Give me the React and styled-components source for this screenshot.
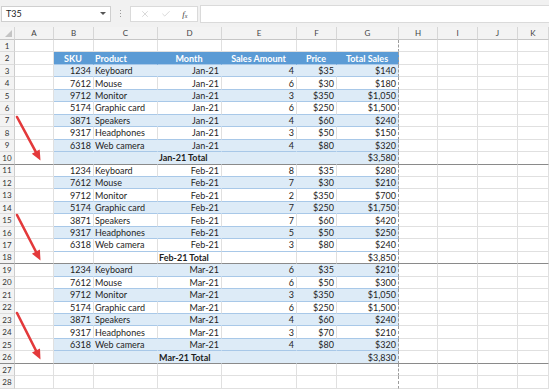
import React from "react";
import styled, { createGlobalStyle } from "styled-components";
import { X, Check } from "lucide-react";

const GlobalStyle = createGlobalStyle`
  html, body { margin: 0; padding: 0; background: #ffffff; }
  body { font-family: Lato, "Liberation Sans", sans-serif; }
`;

const COLS = "15px 39px 40px 64px 64px 75px 40px 62px 39px 40px 40px 1fr";
const BLUE = "#ddebf7";
const HEAD = "#5b9bd5";
const LETTERS = ["A", "B", "C", "D", "E", "F", "G", "H", "I", "J", "K"];

const Page = styled.div`
  position: relative;
  width: 549px;
  height: 389px;
  overflow: hidden;
  background: #fff;
`;

const Toolbar = styled.div`
  display: flex;
  align-items: center;
  height: 27px;
  padding: 0 0 0 1px;
  background: #f1f1f1;
  box-sizing: border-box;
`;

const NameBox = styled.div`
  display: flex;
  align-items: center;
  justify-content: space-between;
  box-sizing: border-box;
  width: 110px;
  height: 16px;
  padding: 0 4px 0 4px;
  background: #fff;
  border: 1px solid #cfcfcf;
  font-size: 9px;
  color: #222;
`;

const Caret = styled.span`
  width: 0;
  height: 0;
  border-left: 3px solid transparent;
  border-right: 3px solid transparent;
  border-top: 3px solid #555;
`;

const Grip = styled.div`
  display: flex;
  flex-direction: column;
  align-items: center;
  justify-content: center;
  gap: 2px;
  width: 19px;
`;

const Dot = styled.span`
  width: 1px;
  height: 1px;
  background: #9a9a9a;
`;

const FxBox = styled.div`
  display: flex;
  align-items: center;
  justify-content: space-around;
  box-sizing: border-box;
  width: 68px;
  height: 16px;
  padding: 0 4px;
  background: #fff;
  border: 1px solid #dadada;
  color: #c2c2c2;
`;

const Fx = styled.span`
  font-family: "Liberation Serif", serif;
  font-style: italic;
  font-size: 9px;
  color: #444;
  & sub { font-size: 6px; vertical-align: -1px; }
`;

const Formula = styled.div`
  flex: 1;
  height: 16px;
  margin-left: 2px;
  background: #fff;
  border: 1px solid #dadada;
  border-right: none;
`;

const Row = styled.div`
  display: grid;
  grid-template-columns: ${COLS};
  height: ${(p) => (p.$head ? "13px" : "12.46px")};
`;

const Cell = styled.div`
  box-sizing: border-box;
  display: flex;
  align-items: center;
  justify-content: ${(p) =>
    p.$align === "right" ? "flex-end" : p.$align === "center" ? "center" : "flex-start"};
  padding: 0 2px 0 1px;
  min-width: 0;
  white-space: nowrap;
  font-size: 9px;
  line-height: 1;
  color: ${(p) => (p.$fill === "head" ? "#fff" : "#1e1e1e")};
  font-weight: ${(p) => (p.$bold ? 700 : 400)};
  background: ${(p) => (p.$fill === "head" ? HEAD : p.$fill === "blue" ? BLUE : "#fff")};
  border-right: 1px
    ${(p) =>
      p.$dash
        ? "dashed #9c9c9c"
        : `solid ${p.$fill === "head" ? HEAD : p.$fill === "blue" ? BLUE : "#e0e0e0"}`};
  border-bottom: 1px solid
    ${(p) => (p.$brk ? "#8a8a8a" : p.$table ? "#a8c8e8" : "#e0e0e0")};
`;

const RowNum = styled.div`
  box-sizing: border-box;
  display: flex;
  align-items: center;
  justify-content: center;
  font-size: 8px;
  color: #333;
  background: #f3f3f3;
  border-right: 1px solid #cdcdcd;
  border-bottom: 1px solid ${(p) => (p.$brk ? "#8a8a8a" : "#dcdcdc")};
`;

const ColHead = styled.div`
  box-sizing: border-box;
  display: flex;
  align-items: center;
  justify-content: center;
  font-size: 8px;
  color: #444;
  background: #f3f3f3;
  border-right: 1px solid #d6d6d6;
  border-bottom: 1px solid #c6c6c6;
`;

const Corner = styled(ColHead)`
  position: relative;
  &::after {
    content: "";
    position: absolute;
    right: 2px;
    bottom: 2px;
    width: 0;
    height: 0;
    border-left: 7px solid transparent;
    border-bottom: 7px solid #c4c4c4;
  }
`;

const Overlay = styled.svg`
  position: absolute;
  left: 0;
  top: 0;
  pointer-events: none;
`;

const months = [
  {
    m: "Jan-21",
    total: "$3,580",
    vals: [
      [4, "$35", "$140"], [6, "$30", "$180"], [3, "$350", "$1,050"], [6, "$250", "$1,500"],
      [4, "$60", "$240"], [3, "$50", "$150"], [4, "$80", "$320"],
    ],
  },
  {
    m: "Feb-21",
    total: "$3,850",
    vals: [
      [8, "$35", "$280"], [7, "$30", "$210"], [2, "$350", "$700"], [7, "$250", "$1,750"],
      [7, "$60", "$420"], [5, "$50", "$250"], [3, "$80", "$240"],
    ],
  },
  {
    m: "Mar-21",
    total: "$3,830",
    vals: [
      [6, "$35", "$210"], [6, "$50", "$300"], [3, "$350", "$1,050"], [6, "$250", "$1,500"],
      [4, "$60", "$240"], [3, "$70", "$210"], [4, "$80", "$320"],
    ],
  },
];

const products = [
  ["1234", "Keyboard"], ["7612", "Mouse"], ["9712", "Monitor"], ["5174", "Graphic card"],
  ["3871", "Speakers"], ["9317", "Headphones"], ["6318", "Web camera"],
];

// rows shaded blue in the table (as in the sheet)
const blueRows = [3, 5, 7, 9, 10, 12, 14, 16, 19, 21, 23, 25, 26];

const buildRows = () => {
  const rows = [{ n: 1, kind: "empty" }, { n: 2, kind: "head" }];
  let n = 3;
  months.forEach((mo) => {
    mo.vals.forEach((v, i) => {
      rows.push({
        n: n++,
        kind: "data",
        cells: [
          [products[i][0], "right"], [products[i][1], "left"], [mo.m, "right"],
          [String(v[0]), "right"], [v[1], "right"], [v[2], "right"],
        ],
      });
    });
    rows.push({ n: n++, kind: "total", cells: [["", "left"], ["", "left"], [`${mo.m} Total`, "left", true], ["", "left"], ["", "left"], [mo.total, "right"]] });
  });
  rows.push({ n: 27, kind: "empty" }, { n: 28, kind: "empty" });
  return rows;
};

const headers = [["SKU", "center"], ["Product", "left"], ["Month", "center"], ["Sales Amount", "center"], ["Price", "center"], ["Total Sales", "center"]];

const Arrow = ({ x1, y1, x2, y2 }) => {
  const dx = x2 - x1;
  const dy = y2 - y1;
  const len = Math.hypot(dx, dy);
  const ux = dx / len;
  const uy = dy / len;
  const bx = x2 - ux * 10;
  const by = y2 - uy * 10;
  const px = -uy * 4.5;
  const py = ux * 4.5;
  return (
    <g>
      <line x1={x1} y1={y1} x2={bx + ux} y2={by + uy} stroke="#e3393b" strokeWidth="2.6" strokeLinecap="round" />
      <polygon points={`${x2},${y2} ${bx + px},${by + py} ${bx - px},${by - py}`} fill="#e3393b" />
    </g>
  );
};

const SheetRow = ({ row }) => {
  const brk = [10, 18, 26].includes(row.n);
  const fill = row.kind === "head" ? "head" : blueRows.includes(row.n) ? "blue" : null;
  const inTable = row.kind !== "empty";
  const content = row.kind === "head" ? headers.map((h) => [h[0], h[1], true]) : row.cells;
  return (
    <Row>
      <RowNum $brk={brk}>{row.n}</RowNum>
      {LETTERS.map((l, i) => {
        const tc = i >= 1 && i <= 6 && inTable;
        const c = tc ? content[i - 1] : null;
        return (
          <Cell
            key={l}
            $align={c ? c[1] : "left"}
            $bold={c ? c[2] : false}
            $fill={tc ? fill : null}
            $table={tc}
            $dash={l === "G"}
            $brk={brk}
          >
            {c ? c[0] : ""}
          </Cell>
        );
      })}
    </Row>
  );
};

export default function App() {
  const rows = buildRows();
  return (
    <Page>
      <GlobalStyle />
      <Toolbar>
        <NameBox>
          T35
          <Caret />
        </NameBox>
        <Grip>
          <Dot />
          <Dot />
          <Dot />
        </Grip>
        <FxBox>
          <X size={10} strokeWidth={1.5} />
          <Check size={10} strokeWidth={1.5} />
          <Fx>
            f<sub>x</sub>
          </Fx>
        </FxBox>
        <Formula />
      </Toolbar>
      <Row $head>
        <Corner />
        {LETTERS.map((l) => (
          <ColHead key={l}>{l}</ColHead>
        ))}
      </Row>
      {rows.map((r) => (
        <SheetRow key={r.n} row={r} />
      ))}
      <Overlay width="549" height="389">
        <Arrow x1={17} y1={117} x2={40.5} y2={160.5} />
        <Arrow x1={17} y1={215} x2={40.5} y2={260.5} />
        <Arrow x1={17} y1={313} x2={40.5} y2={359.5} />
      </Overlay>
    </Page>
  );
}
